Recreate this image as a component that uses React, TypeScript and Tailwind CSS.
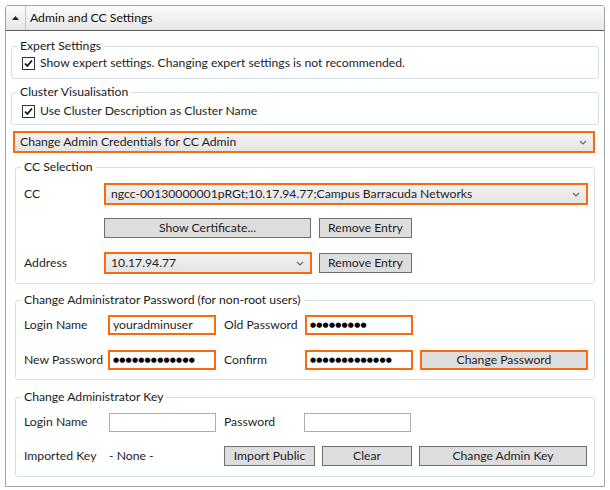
import React from "react";

const orange = "border-2 border-[#f96b10]";

function Chevron() {
  return (
    <svg width="8" height="5" viewBox="0 0 8 5" className="shrink-0">
      <path d="M1 1 L4 4 L7 1" fill="none" stroke="#6a6a6a" strokeWidth="1.2" />
    </svg>
  );
}

function CheckBox() {
  return (
    <span className="flex h-[13px] w-[13px] shrink-0 items-center justify-center border border-[#333] bg-white">
      <svg width="11" height="11" viewBox="0 0 11 11">
        <path d="M2 5.5 L4.3 8 L9 2.5" fill="none" stroke="#111" strokeWidth="1.8" />
      </svg>
    </span>
  );
}

// fieldset + legend, padding goes on the inner div so the legend stays put
function Group({
  title,
  className,
  inner,
  children,
}: {
  title: string;
  className?: string;
  inner?: string;
  children: React.ReactNode;
}) {
  return (
    <fieldset className={"rounded-[3px] border border-[#d5dfe5] " + (className ?? "")}>
      <legend className="ml-[5px] px-[3px] leading-[16px] text-[#1a1a1a]">{title}</legend>
      <div className={inner}>{children}</div>
    </fieldset>
  );
}

function Combo({ text, className }: { text: string; className?: string }) {
  return (
    <div
      className={
        "flex h-[22px] items-center justify-between bg-gradient-to-b from-[#f2f2f2] to-[#e4e4e4] pl-[5px] pr-[6px] " +
        orange +
        " " +
        (className ?? "")
      }
    >
      <span className="truncate">{text}</span>
      <Chevron />
    </div>
  );
}

function Button({ text, className }: { text: string; className?: string }) {
  return (
    <div
      className={
        "flex h-[20px] items-center justify-center border border-[#707070] bg-[#dddddd] " + (className ?? "")
      }
    >
      {text}
    </div>
  );
}

function Dots({ n }: { n: number }) {
  return (
    <span className="font-['DejaVu_Sans'] text-[7px] tracking-[0.2px] text-black">{"●".repeat(n)}</span>
  );
}

function OrangeInput({ children }: { children: React.ReactNode }) {
  return (
    <div className={"flex h-[20px] w-[108px] items-center pl-[3px] " + orange}>{children}</div>
  );
}

export default function App() {
  return (
    <div className="h-[490px] w-[610px] bg-white p-[5px] font-['Lato',sans-serif] text-[12.2px] text-[#1e1e1e]">
      <div className="flex h-[482px] flex-col rounded-t-[3px] border border-[#a3a3a3]">
        {/* header */}
        <div className="flex h-[25px] shrink-0 items-center border-b border-[#5c5c5c] bg-gradient-to-b from-[#fcfcfc] to-[#e6e6e6]">
          <div className="flex h-full w-[20px] items-center justify-center border-r border-[#c6c6c6]">
            <svg width="7" height="4" viewBox="0 0 7 4">
              <path d="M0 4 L3.5 0 L7 4 Z" fill="#222" />
            </svg>
          </div>
          <span className="pl-[4px] text-[#111]">Admin and CC Settings</span>
        </div>

        <div className="flex flex-col px-[5px]">
          <Group title="Expert Settings" className="mt-[7px]" inner="pb-[7px] pl-[10px] pt-[1px]">
            <div className="flex h-[16px] items-center gap-[5px]">
              <CheckBox />
              <span>Show expert settings. Changing expert settings is not recommended.</span>
            </div>
          </Group>

          <Group title="Cluster Visualisation" className="mt-[5px]" inner="pb-[5px] pl-[10px] pt-[3px]">
            <div className="flex h-[16px] items-center gap-[5px]">
              <CheckBox />
              <span>Use Cluster Description as Cluster Name</span>
            </div>
          </Group>

          <Combo text="Change Admin Credentials for CC Admin" className="ml-[2px] mr-[4px] mt-[6px]" />

          <div className="flex flex-col px-[4px]">
            <Group title="CC Selection" className="mt-[6px]" inner="pb-[9px] pl-[8px] pr-[6px]">
              <div className="mt-[8px] flex items-center">
                <span className="w-[80px]">CC</span>
                <Combo
                  text="ngcc-00130000001pRGt;10.17.94.77;Campus Barracuda Networks"
                  className="flex-1"
                />
              </div>
              <div className="mt-[13px] flex items-center">
                <span className="w-[80px]" />
                <Button text="Show Certificate..." className="w-[207px]" />
                <Button text="Remove Entry" className="ml-[8px] w-[93px]" />
              </div>
              <div className="mt-[14px] flex items-center">
                <span className="w-[80px]">Address</span>
                <Combo text="10.17.94.77" className="w-[208px]" />
                <Button text="Remove Entry" className="ml-[7px] w-[93px]" />
              </div>
            </Group>

            <Group
              title="Change Administrator Password (for non-root users)"
              className="mt-[8px]"
              inner="pb-[9px] pl-[8px]"
            >
              <div className="mt-[7px] flex items-center">
                <span className="w-[84px]">Login Name</span>
                <OrangeInput>youradminuser</OrangeInput>
                <span className="ml-[8px] w-[81px]">Old Password</span>
                <OrangeInput>
                  <Dots n={9} />
                </OrangeInput>
              </div>
              <div className="mt-[15px] flex items-center">
                <span className="w-[84px]">New Password</span>
                <OrangeInput>
                  <Dots n={13} />
                </OrangeInput>
                <span className="ml-[8px] w-[81px]">Confirm</span>
                <OrangeInput>
                  <Dots n={13} />
                </OrangeInput>
                <div
                  className={
                    "ml-[7px] flex h-[20px] w-[168px] items-center justify-center bg-[#dddddd] " + orange
                  }
                >
                  Change Password
                </div>
              </div>
            </Group>

            <Group title="Change Administrator Key" className="mt-[9px]" inner="pb-[10px] pl-[8px]">
              <div className="mt-[8px] flex items-center">
                <span className="w-[85px]">Login Name</span>
                <div className="h-[19px] w-[107px] border border-[#abadb3] bg-white" />
                <span className="ml-[8px] w-[80px]">Password</span>
                <div className="h-[19px] w-[107px] border border-[#abadb3] bg-white" />
              </div>
              <div className="mt-[14px] flex items-center">
                <span className="w-[85px]">Imported Key</span>
                <span className="w-[115px]">- None -</span>
                <Button text="Import Public" className="w-[91px]" />
                <Button text="Clear" className="ml-[7px] w-[90px]" />
                <Button text="Change Admin Key" className="ml-[7px] w-[168px]" />
              </div>
            </Group>
          </div>
        </div>
      </div>
    </div>
  );
}
